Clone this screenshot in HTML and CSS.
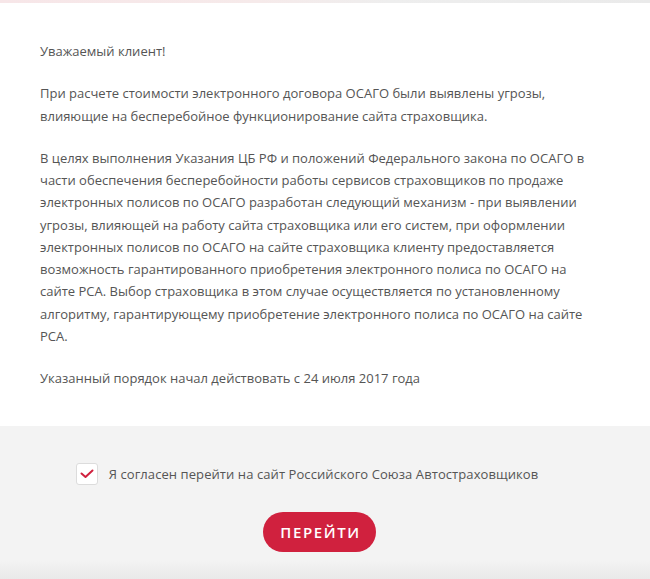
FILE: index.html
```html
<!DOCTYPE html>
<html lang="ru">
<head>
<meta charset="utf-8">
<link rel="stylesheet" href="styles.css">
</head>
<body>
<div class="topband"></div>
<main class="notice">
  <p>Уважаемый клиент!</p>
  <p>При расчете стоимости электронного договора ОСАГО были выявлены угрозы, влияющие на бесперебойное функционирование сайта страховщика.</p>
  <p>В целях выполнения Указания ЦБ РФ и положений Федерального закона по ОСАГО в части обеспечения бесперебойности работы сервисов страховщиков по продаже электронных полисов по ОСАГО разработан следующий механизм - при выявлении угрозы, влияющей на работу сайта страховщика или его систем, при оформлении электронных полисов по ОСАГО на сайте страховщика клиенту предоставляется возможность гарантированного приобретения электронного полиса по ОСАГО на сайте РСА. Выбор страховщика в этом случае осуществляется по установленному алгоритму, гарантирующему приобретение электронного полиса по ОСАГО на сайте РСА.</p>
  <p>Указанный порядок начал действовать с 24 июля 2017 года</p>
</main>
<footer class="actions">
  <label class="agree">
    <span class="box">
      <svg width="14" height="10" viewBox="0 0 14 10"><path d="M1.5 4.5 L5.5 8 L12.5 1.5" fill="none" stroke="#d0213e" stroke-width="2" stroke-linecap="round" stroke-linejoin="round"/></svg>
    </span>
    <span class="agree-text">Я согласен перейти на сайт Российского Союза Автостраховщиков</span>
  </label>
  <button class="go">ПЕРЕЙТИ</button>
</footer>
</body>
</html>
```
FILE: styles.css
```css
html, body {
  margin: 0;
  padding: 0;
  background: #ffffff;
}
body {
  font-family: "Open Sans", "Liberation Sans", sans-serif;
  font-size: 13px;
  color: #555555;
  width: 650px;
  height: 579px;
  display: flex;
  flex-direction: column;
  overflow: hidden;
}
.topband {
  height: 3px;
  background: linear-gradient(90deg, #f7e6e8 0%, #f6eaea 40%, #eeeeee 60%, #eaeaea 100%);
}
.notice {
  padding: 37px 50px 37px 40px;
}
.notice p {
  margin: 0 0 20px 0;
  line-height: 22.25px;
}
.notice p:last-child {
  margin-bottom: 0;
}
.actions {
  flex: 1;
  background: linear-gradient(180deg, #f3f3f3 0%, #f3f3f3 88%, #e9e9e9 100%);
  display: flex;
  flex-direction: column;
  align-items: center;
  padding-top: 37px;
}
.agree {
  display: flex;
  align-items: center;
  gap: 11px;
  margin-left: -36px;
}
.box {
  width: 20px;
  height: 20px;
  border: 1px solid #dcdcdc;
  border-radius: 3px;
  background: #fff;
  display: flex;
  align-items: center;
  justify-content: center;
}
.agree-text {
  line-height: 22px;
  letter-spacing: 0.08px;
}
.go {
  margin-top: 27px;
  margin-left: -11px;
  width: 113px;
  height: 40px;
  border: none;
  border-radius: 20px;
  background: #d0213e;
  color: #fff;
  font-family: "Open Sans", "Liberation Sans", sans-serif;
  font-size: 15px;
  font-weight: 600;
  letter-spacing: 1.6px;
  padding: 0 0 0 2px;
}
```
